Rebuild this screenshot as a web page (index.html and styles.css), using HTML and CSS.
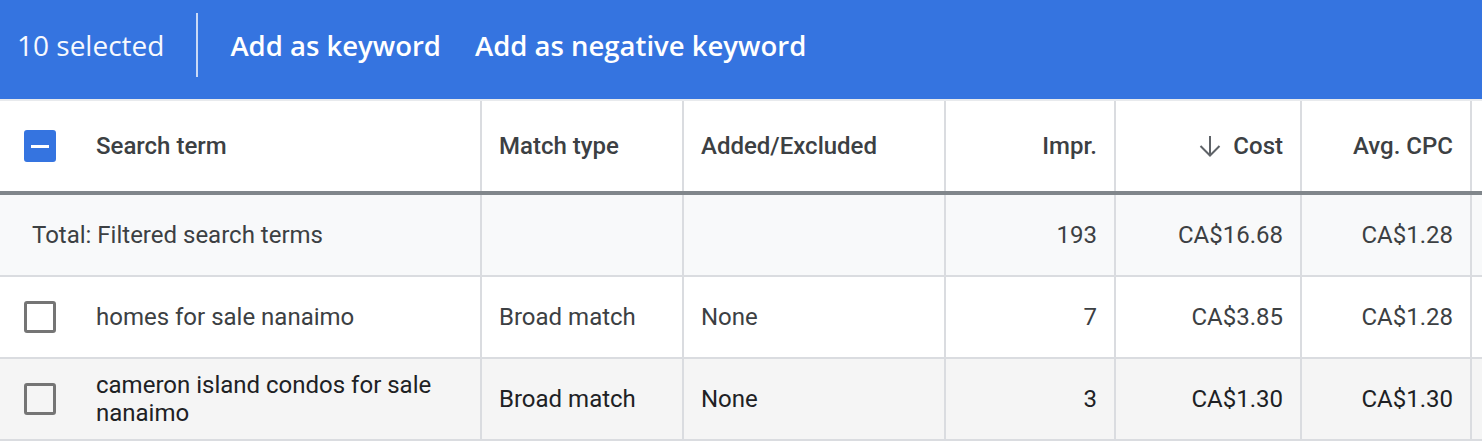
FILE: index.html
```html
<!DOCTYPE html>
<html>
<head>
<meta charset="utf-8">
<link rel="stylesheet" href="styles.css">
</head>
<body>
<div class="selbar">
  <span class="count">10 selected</span>
  <span class="divider"></span>
  <span class="action">Add as keyword</span>
  <span class="action">Add as negative keyword</span>
</div>
<div class="grid">
  <div class="row head">
    <div class="cell first"><span class="cb checked"><span class="dash"></span></span><span class="txt">Search term</span></div>
    <div class="cell">Match type</div>
    <div class="cell">Added/Excluded</div>
    <div class="cell num">Impr.</div>
    <div class="cell num"><svg class="sort" width="22" height="24" viewBox="0 0 22 24"><path d="M11 2v19.5M1.5 12L11 21.5l9.5-9.5" fill="none" stroke="#5f6368" stroke-width="2"/></svg>Cost</div>
    <div class="cell num">Avg. CPC</div>
    <div class="cell last"></div>
  </div>
  <div class="row total">
    <div class="cell first totaltxt">Total: Filtered search terms</div>
    <div class="cell"></div>
    <div class="cell"></div>
    <div class="cell num">193</div>
    <div class="cell num">CA$16.68</div>
    <div class="cell num">CA$1.28</div>
    <div class="cell last"></div>
  </div>
  <div class="row data">
    <div class="cell first"><span class="cb"></span><span class="txt">homes for sale nanaimo</span></div>
    <div class="cell">Broad match</div>
    <div class="cell">None</div>
    <div class="cell num">7</div>
    <div class="cell num">CA$3.85</div>
    <div class="cell num">CA$1.28</div>
    <div class="cell last"></div>
  </div>
  <div class="row data hover">
    <div class="cell first"><span class="cb"></span><span class="txt">cameron island condos for sale nanaimo</span></div>
    <div class="cell">Broad match</div>
    <div class="cell">None</div>
    <div class="cell num">3</div>
    <div class="cell num">CA$1.30</div>
    <div class="cell num">CA$1.30</div>
    <div class="cell last"></div>
  </div>
</div>
</body>
</html>
```
FILE: styles.css
```css
html, body {
  margin: 0;
  padding: 0;
  background: #ffffff;
}
body {
  font-family: Roboto, "Liberation Sans", sans-serif;
  color: #3c4043;
  overflow: hidden;
}
.selbar {
  height: 101px;
  background: #3574e0;
  display: flex;
  align-items: center;
  padding-left: 17px;
  padding-bottom: 9px;
  box-sizing: border-box;
  font-family: "Open Sans", Roboto, sans-serif;
  font-size: 28px;
  color: #ffffff;
  border-bottom: 2px solid #e8eaed;
}
.count {
  font-weight: 400;
  color: #f7f9fe;
}
.divider {
  width: 2px;
  height: 64px;
  background: #c9d9f6;
  margin: 0 32px 0 32px;
  align-self: center;
}
.action {
  font-weight: 600;
  font-size: 27.5px;
  margin-right: 34px;
}
.grid {
  font-size: 24px;
}
.row {
  display: grid;
  grid-template-columns: 482px 202px 262px 170px 186px 170px 1fr;
  border-bottom: 2px solid #dadce0;
}
.row.head {
  height: 94px;
  border-bottom: 4px solid #80868b;
  box-sizing: border-box;
  font-weight: 500;
  color: #3c4043;
  background: #fff;
}
.row.total {
  height: 82px;
  box-sizing: border-box;
  background: #f8f9fa;
}
.row.data {
  height: 82px;
  box-sizing: border-box;
  background: #fff;
}
.row.data.hover {
  background: #f5f5f5;
  color: #202124;
}
.cell {
  border-right: 2px solid #dadce0;
  display: flex;
  align-items: center;
  padding: 0 17px;
  box-sizing: border-box;
  min-width: 0;
}
.cell.num {
  justify-content: flex-end;
}
.cell.last {
  border-right: none;
}
.cell.first {
  padding: 0 20px 0 24px;
}
.cell.totaltxt {
  padding-left: 32px;
}
.txt {
  margin-left: 40px;
  line-height: 28px;
}
.cb {
  flex: none;
  width: 32px;
  height: 32px;
  box-sizing: border-box;
  border: 3px solid #757575;
  border-radius: 3px;
  display: flex;
  align-items: center;
  justify-content: center;
}
.cb.checked {
  background: #3574e0;
  border-color: #3574e0;
}
.dash {
  width: 18px;
  height: 3px;
  background: #fff;
}
.sort {
  margin-right: 12px;
}
```
